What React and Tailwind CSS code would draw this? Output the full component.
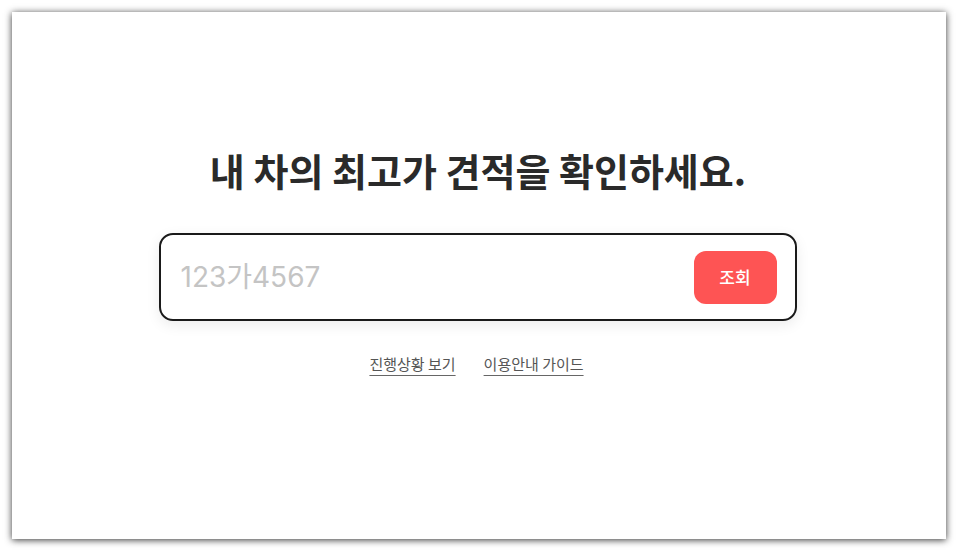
export default function App() {
  return (
    <div className="w-[960px] h-[552px] bg-white pt-[12px] pl-[12px] pr-[14px] pb-[13px]">
      <div
        className="w-full h-full bg-white flex flex-col items-center pt-[132px] shadow-[0_1px_7px_rgba(0,0,0,0.8)]"
        style={{ fontFamily: '"Noto Sans CJK KR", "Noto Sans", sans-serif' }}
      >
        <h1 className="text-[38px] leading-[52px] font-bold text-[#2a2a2a] -ml-[2px]">
          내 차의 최고가 견적을 확인하세요.
        </h1>

        <div className="mt-[37px] -ml-[3px] w-[638px] h-[88px] border-2 border-[#1a1a1a] rounded-[14px] flex items-center pl-[20px] pr-[18px] shadow-[0_4px_14px_rgba(0,0,0,0.08)]">
          <input
            autoFocus
            placeholder="123가4567"
            className="flex-1 outline-none bg-transparent text-[28px] text-[#333] placeholder:text-[#c4c4c4]"
            style={{ fontFamily: 'Inter, "Noto Sans CJK KR", sans-serif' }}
          />
          <button className="w-[83px] h-[53px] rounded-[12px] bg-[#fe5454] text-white text-[17px] font-medium">
            조회
          </button>
        </div>

        <div className="mt-[32px] -ml-[5px] flex gap-[28px] text-[15px] text-[#555]">
          <a className="underline underline-offset-[5px] decoration-[#666]">진행상황 보기</a>
          <a className="underline underline-offset-[5px] decoration-[#666]">이용안내 가이드</a>
        </div>
      </div>
    </div>
  );
}
